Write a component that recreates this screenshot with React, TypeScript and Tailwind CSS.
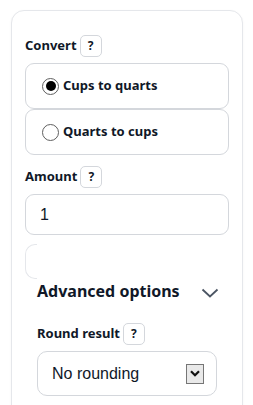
import { useState } from "react";

const FONT = { fontFamily: '"Noto Sans", "Open Sans", sans-serif' };
const ARIAL = { fontFamily: '"Liberation Sans", Arial, sans-serif' };

function HelpBadge() {
  return (
    <span className="ml-[3px] inline-flex h-[22px] w-[22px] items-center justify-center rounded-[5px] border border-[#d4d7dc] bg-white text-[12px] font-bold text-gray-900">
      ?
    </span>
  );
}

function Label({ children }: { children: string }) {
  return (
    <div className="flex h-[22px] items-center text-[13px] font-bold text-gray-900">
      <span>{children}</span>
      <HelpBadge />
    </div>
  );
}

function RadioRow({ label, checked, onSelect }: { label: string; checked: boolean; onSelect: () => void }) {
  return (
    <button
      onClick={onSelect}
      className="flex h-[46px] w-full items-center rounded-[9px] border border-[#d4d7dc] bg-white pl-[16px] text-left"
    >
      <span className="flex h-[17px] w-[17px] items-center justify-center rounded-full border-[1.5px] border-[#5f5f5f] bg-white">
        {checked && <span className="h-[10px] w-[10px] rounded-full bg-black" />}
      </span>
      <span className="ml-[4px] text-[13px] font-bold text-gray-900">{label}</span>
    </button>
  );
}

export default function App() {
  const [mode, setMode] = useState("cups");

  return (
    <div className="h-[405px] overflow-hidden bg-white px-[11px] pt-[10px]" style={FONT}>
      <div className="h-[420px] w-[232px] rounded-[13px] border border-[#e5e7eb] bg-white px-[13px] pt-[24px] shadow-[0_1px_3px_rgba(0,0,0,0.04)]">
        <Label>Convert</Label>
        <div className="mt-[6px] flex flex-col">
          <RadioRow label="Cups to quarts" checked={mode === "cups"} onSelect={() => setMode("cups")} />
          <RadioRow label="Quarts to cups" checked={mode === "quarts"} onSelect={() => setMode("quarts")} />
        </div>

        <div className="mt-[11px]">
          <Label>Amount</Label>
        </div>
        <div className="mt-[6px] flex h-[41px] items-center rounded-[9px] border border-[#d4d7dc] pl-[14px] text-[16px] text-gray-900" style={ARIAL}>
          1
        </div>

        <div className="mt-[9px] h-[35px] w-[12px] rounded-l-[10px] border border-r-0 border-[#e5e7eb]" />

        <div className="px-[12px]">
          <div className="mt-[2px] flex h-[20px] items-center whitespace-nowrap">
            <span className="shrink-0 text-[16px] font-bold text-gray-900">Advanced options</span>
            <svg className="ml-[21px] mt-[3px] shrink-0" width="18" height="10" viewBox="0 0 18 10" fill="none">
              <path d="M1.5 1.5 L9 8.5 L16.5 1.5" stroke="#4b5563" strokeWidth="1.8" />
            </svg>
          </div>

          <div className="mt-[22px]">
            <Label>Round result</Label>
          </div>
          <div className="mt-[6px] flex h-[45px] items-center justify-between rounded-[10px] border border-[#d4d7dc] pl-[14px] pr-[12px]">
            <span className="text-[16px] text-gray-900" style={ARIAL}>
              No rounding
            </span>
            <span className="flex h-[20px] w-[18px] items-center justify-center border border-[#767676] bg-[#e9e9e9]">
              <svg width="10" height="7" viewBox="0 0 10 7" fill="none">
                <path d="M1 1.2 L5 5.2 L9 1.2" stroke="#111" strokeWidth="2.2" />
              </svg>
            </span>
          </div>
        </div>
      </div>
    </div>
  );
}
